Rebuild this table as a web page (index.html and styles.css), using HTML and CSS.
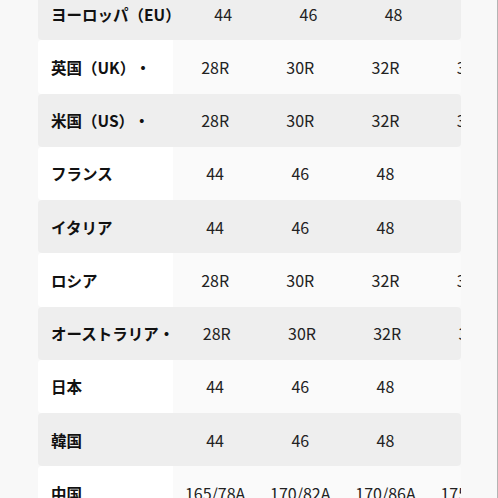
FILE: index.html
```html
<!DOCTYPE html>
<html lang="ja">
<head>
<meta charset="utf-8">
<title>サイズ表</title>
<link rel="stylesheet" href="styles.css">
</head>
<body>
<div class="page">
  <div class="table">
    <div class="row gray"><div class="label">ヨーロッパ（EU）</div><div class="cell">44</div><div class="cell">46</div><div class="cell">48</div><div class="cell"></div></div>
    <div class="row white"><div class="label">英国（UK）・</div><div class="cell">28R</div><div class="cell">30R</div><div class="cell">32R</div><div class="cell">34R</div></div>
    <div class="row gray"><div class="label">米国（US）・</div><div class="cell">28R</div><div class="cell">30R</div><div class="cell">32R</div><div class="cell">34R</div></div>
    <div class="row white"><div class="label">フランス</div><div class="cell">44</div><div class="cell">46</div><div class="cell">48</div><div class="cell"></div></div>
    <div class="row gray"><div class="label">イタリア</div><div class="cell">44</div><div class="cell">46</div><div class="cell">48</div><div class="cell"></div></div>
    <div class="row white"><div class="label">ロシア</div><div class="cell">28R</div><div class="cell">30R</div><div class="cell">32R</div><div class="cell">34R</div></div>
    <div class="row gray"><div class="label">オーストラリア・</div><div class="cell">28R</div><div class="cell">30R</div><div class="cell">32R</div><div class="cell">34R</div></div>
    <div class="row white"><div class="label">日本</div><div class="cell">44</div><div class="cell">46</div><div class="cell">48</div><div class="cell"></div></div>
    <div class="row gray"><div class="label">韓国</div><div class="cell">44</div><div class="cell">46</div><div class="cell">48</div><div class="cell"></div></div>
    <div class="row white"><div class="label">中国</div><div class="cell">165/78A</div><div class="cell">170/82A</div><div class="cell">170/86A</div><div class="cell">175/90A</div></div>
  </div>
</div>
</body>
</html>
```

FILE: styles.css
```css
html, body {
  margin: 0;
  padding: 0;
  background: #f8f8f8;
}
body {
  width: 498px;
  height: 498px;
  overflow: hidden;
  font-family: "Noto Sans CJK JP", sans-serif;
}
.page {
  height: 498px;
  padding-left: 38px;
  border-right: 1px solid #b4b4b4;
  box-sizing: border-box;
  overflow: hidden;
}
.table {
  width: 423px;
  margin-top: -13px;
  overflow: hidden;
}
.row {
  display: flex;
  height: 53.25px;
  border-radius: 4px;
  overflow: hidden;
}
.row.gray {
  background: #eeeeee;
}
.row.white {
  background: #fafafa;
}
.row.white .label {
  background: #ffffff;
}
.label {
  flex: 0 0 134.5px;
  box-sizing: border-box;
  padding-left: 13px;
  display: flex;
  align-items: center;
  font-weight: 700;
  font-size: 15.5px;
  color: #111;
  white-space: nowrap;
  text-spacing-trim: space-all;
}
.cell {
  flex: 0 0 85.2px;
  display: flex;
  align-items: center;
  justify-content: center;
  font-size: 16px;
  color: #222;
  white-space: nowrap;
}
```
